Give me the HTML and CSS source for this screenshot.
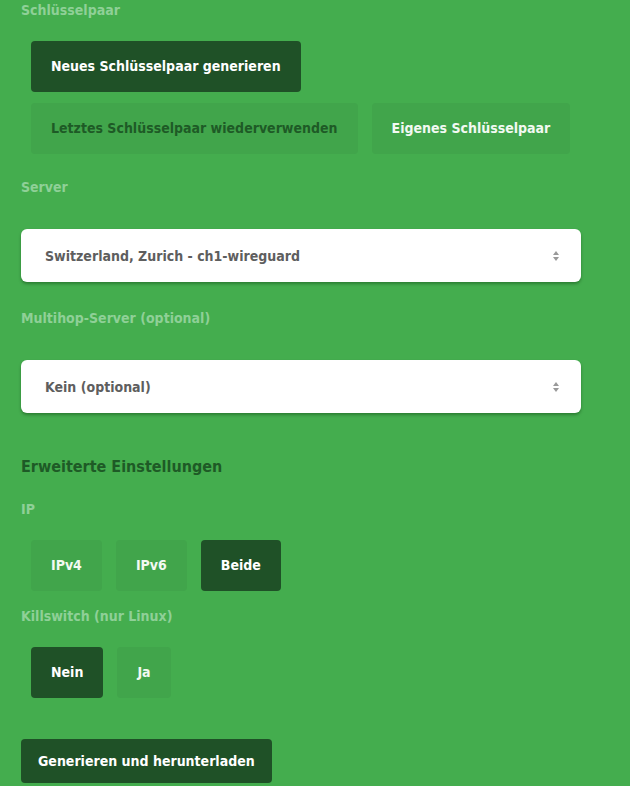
FILE: index.html
```html
<!DOCTYPE html>
<html lang="de">
<head>
<meta charset="utf-8">
<link rel="stylesheet" href="styles.css">
</head>
<body>
<div class="page">
  <div class="label">Schlüsselpaar</div>
  <div class="btn-group keys">
    <button class="btn active">Neues Schlüsselpaar generieren</button>
    <button class="btn dim">Letztes Schlüsselpaar wiederverwenden</button>
    <button class="btn">Eigenes Schlüsselpaar</button>
  </div>

  <div class="label label-select">Server</div>
  <div class="select">
    <span>Switzerland, Zurich - ch1-wireguard</span>
    <svg class="arrows" width="8" height="12" viewBox="0 0 8 12"><path d="M4 1 L7 5 H1 Z M4 11 L1 7 H7 Z" fill="#999"/></svg>
  </div>

  <div class="label label-select">Multihop-Server (optional)</div>
  <div class="select">
    <span>Kein (optional)</span>
    <svg class="arrows" width="8" height="12" viewBox="0 0 8 12"><path d="M4 1 L7 5 H1 Z M4 11 L1 7 H7 Z" fill="#999"/></svg>
  </div>

  <h3 class="heading">Erweiterte Einstellungen</h3>
  <div class="label">IP</div>
  <div class="btn-group">
    <button class="btn">IPv4</button>
    <button class="btn">IPv6</button>
    <button class="btn active">Beide</button>
  </div>

  <div class="label">Killswitch (nur Linux)</div>
  <div class="btn-group">
    <button class="btn active">Nein</button>
    <button class="btn">Ja</button>
  </div>

  <button class="submit">Generieren und herunterladen</button>
</div>
</body>
</html>
```
FILE: styles.css
```css
html, body {
  margin: 0;
  padding: 0;
  background: #44ad4e;
}
body {
  font-family: "DejaVu Sans Condensed", "DejaVu Sans", sans-serif;
  font-weight: bold;
  font-size: 14px;
  color: #fff;
}
.page {
  padding: 0 49px 0 21px;
  display: flex;
  flex-direction: column;
  align-items: flex-start;
}
.label {
  color: #8fd097;
  font-size: 14px;
  line-height: 20px;
  margin-top: 0;
}
.btn-group {
  display: flex;
  flex-wrap: wrap;
  gap: 11px 14px;
  padding-left: 10px;
  margin-top: 21px;
  margin-bottom: 15px;
}
.btn {
  font: inherit;
  font-size: 14px;
  border: none;
  border-radius: 4px;
  background: #41a54b;
  color: #f2f9f2;
  height: 51px;
  padding: 0 20px;
  line-height: 51px;
  cursor: pointer;
}
.btn.active {
  background: #1f5127;
  color: #fff;
}
.btn.dim {
  color: #1e5a26;
}
.label-select {
  margin-top: 8px;
}
.select {
  align-self: stretch;
  margin-top: 32px;
  margin-bottom: 18px;
  height: 53px;
  background: #fff;
  border-radius: 6px;
  box-shadow: 0 2px 3px rgba(0, 40, 0, 0.35);
  display: flex;
  align-items: center;
  justify-content: space-between;
  padding: 0 21px 0 24px;
  color: #5e5e5e;
  font-size: 14px;
}
.heading {
  margin: 26px 0 22px;
  color: #1e5a26;
  font-size: 16px;
  line-height: 20px;
}
.submit {
  font: inherit;
  font-size: 14px;
  margin-top: 26px;
  height: 44px;
  border: none;
  border-radius: 4px;
  background: #1f5127;
  color: #fff;
  padding: 0 17px;
}
```
